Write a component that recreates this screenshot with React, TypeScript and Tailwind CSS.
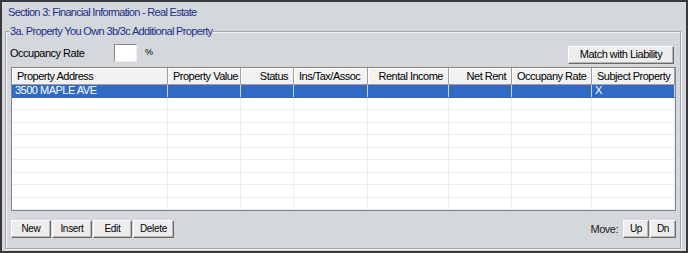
import React from "react";

const cols = [
  { name: "Property Address", w: 156, align: "left" },
  { name: "Property Value", w: 73, align: "left" },
  { name: "Status", w: 53, align: "right" },
  { name: "Ins/Tax/Assoc", w: 74, align: "left" },
  { name: "Rental Income", w: 81, align: "right" },
  { name: "Net Rent", w: 63, align: "right" },
  { name: "Occupany Rate", w: 80, align: "left" },
  { name: "Subject Property", w: 83, align: "left" },
];

const rows: string[][] = [
  ["3500 MAPLE AVE", "", "", "", "", "", "", "X"],
  ...Array.from({ length: 9 }, () => ["", "", "", "", "", "", "", ""]),
];

function Btn({ label, w }: { label: string; w: string }) {
  return (
    <button
      className={`${w} h-[18px] bg-[#ededed] border border-t-white border-l-white border-r-[#6b6b6b] border-b-[#6b6b6b] shadow-[inset_-1px_-1px_0_#b5b5b5] text-[10px] tracking-[-0.3px] leading-none text-black flex items-center justify-center`}
    >
      {label}
    </button>
  );
}

export default function App() {
  return (
    <div
      className="w-[688px] h-[253px] border-2 border-[#3a3a3a] bg-[#d4d8dc] flex flex-col text-[10px] tracking-[-0.3px] text-black"
      style={{ fontFamily: '"Liberation Sans", Arial, sans-serif' }}
    >
      <div className="h-[29px] pl-[6px] pt-[2px] text-[11px] tracking-[-0.7px] text-[#1c2e8c]">Section 3: Financial Information - Real Estate</div>
      <div className="relative ml-[3px] mr-[5px] h-[218px] border border-[#a3a6aa] shadow-[inset_1px_1px_0_#f4f5f6,1px_1px_0_#f4f5f6] flex flex-col">
        <span className="absolute left-[3px] top-[-8px] px-[1px] bg-[#d4d8dc] text-[#1c2e8c] text-[11px] tracking-[-0.65px] leading-[14px]">
          3a. Property You Own 3b/3c Additional Property
        </span>
        <div className="mt-[11px] h-[20px] flex items-center pl-[4px] pr-[6px]">
          <span className="w-[104px] text-[11px] tracking-[-0.5px]">Occupancy Rate</span>
          <div className="w-[23px] h-[18px] bg-white border border-t-[#8a8a8a] border-l-[#8a8a8a] border-r-[#eeeeee] border-b-[#eeeeee]" />
          <span className="ml-[8px] text-[9px]">%</span>
          <div className="flex-1" />
          <button className="mt-[3px] w-[106px] h-[18px] bg-[#ededed] border border-t-white border-l-white border-r-[#6b6b6b] border-b-[#6b6b6b] shadow-[inset_-1px_-1px_0_#b5b5b5] text-[11px] tracking-[-0.5px] leading-none flex items-center justify-center">
            Match with Liability
          </button>
        </div>
        <div className="mt-[4px] ml-[5px] w-[665px] h-[144px] border border-[#858585] bg-white flex flex-col">
          <div className="h-[17px] flex bg-[#f2f2f2] border-b border-[#a0a0a0]">
            {cols.map((c, i) => (
              <div
                key={i}
                style={{ width: c.w }}
                className={`h-full shrink-0 border-r border-[#a0a0a0] shadow-[inset_1px_1px_0_#ffffff] px-[5px] flex items-center ${
                  c.align === "right" ? "justify-end" : "justify-start"
                } whitespace-nowrap overflow-hidden text-[11px] tracking-[-0.5px]`}
              >
                {c.name}
              </div>
            ))}
          </div>
          <div className="flex-1 flex flex-col">
            {rows.map((r, ri) => (
              <div
                key={ri}
                className={`flex-1 flex ${ri === 0 ? "bg-[#3169c6] text-white" : ""} border-b ${
                  ri === 0 ? "border-[#3169c6]" : "border-[#ececec]"
                }`}
              >
                {r.map((v, ci) => (
                  <div
                    key={ci}
                    style={{ width: cols[ci].w }}
                    className={`shrink-0 h-full border-r ${
                      ri === 0 ? "border-[#c9d7ef]" : "border-[#ececec]"
                    } pl-[3px] flex items-center leading-none whitespace-nowrap overflow-hidden text-[11px] tracking-[-0.5px]`}
                  >
                    {v}
                  </div>
                ))}
              </div>
            ))}
          </div>
        </div>
        <div className="mt-[9px] ml-[5px] mr-[4px] flex items-center">
          <div className="flex gap-[1px]">
            <Btn label="New" w="w-[40px]" />
            <Btn label="Insert" w="w-[40px]" />
            <Btn label="Edit" w="w-[39px]" />
            <Btn label="Delete" w="w-[41px]" />
          </div>
          <div className="flex-1" />
          <span className="mr-[5px] text-[11px] tracking-[-0.5px] text-[#222]">Move:</span>
          <div className="flex gap-[1px]">
            <Btn label="Up" w="w-[26px]" />
            <Btn label="Dn" w="w-[26px]" />
          </div>
        </div>
      </div>
    </div>
  );
}
